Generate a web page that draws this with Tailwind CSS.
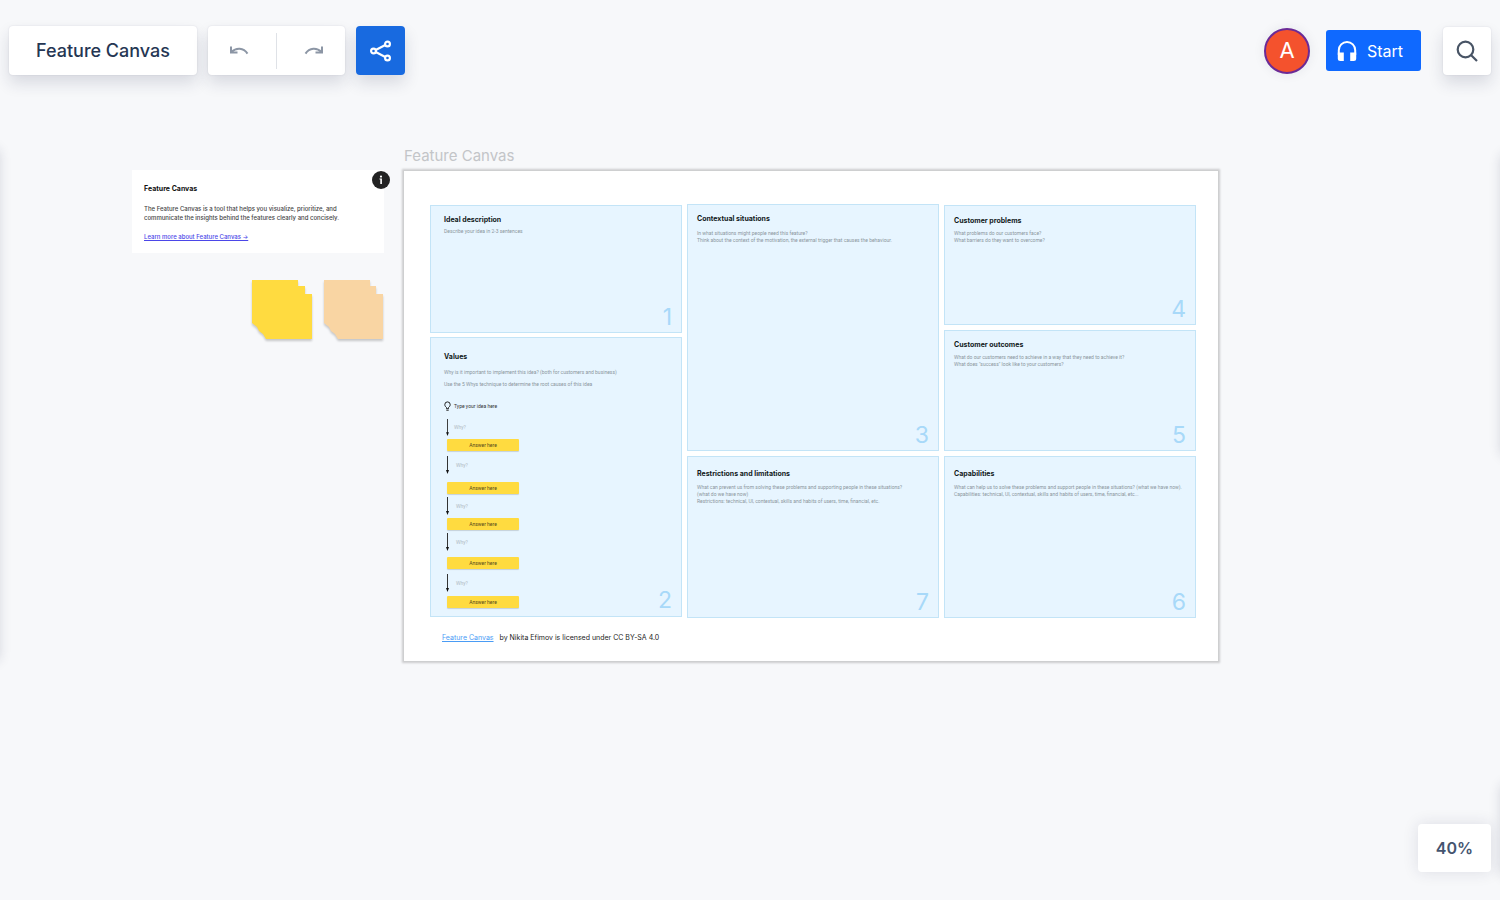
<!DOCTYPE html>
<html lang="en">
<head>
  <meta charset="UTF-8" />
  <meta name="viewport" content="width=device-width, initial-scale=1.0" />
  <title>Feature Canvas</title>
  <script src="https://cdn.jsdelivr.net/npm/@tailwindcss/browser@4"></script>
</head>
<body class="relative min-h-screen overflow-hidden bg-[#f7f8fa] font-['Inter',sans-serif] antialiased">

  <!-- Toolbar -->
  <header class="relative z-10 flex items-center justify-between px-[9px] pt-[26px]">
    <div class="flex items-center gap-[11px]">
      <button class="h-[49px] rounded bg-white px-[27px] text-lg font-medium text-[#253653] shadow-[0_8px_16px_rgba(30,35,70,0.14),0_0_2px_rgba(30,35,70,0.12)]">Feature Canvas</button>
      <div class="flex h-[49px] items-center rounded bg-white shadow-[0_8px_16px_rgba(30,35,70,0.14),0_0_2px_rgba(30,35,70,0.12)]">
        <button aria-label="Undo" class="flex h-full w-[68px] items-center justify-center pr-1.5">
          <svg class="h-3 w-5" viewBox="0 0 20 12" fill="none" stroke="#8c96a5" stroke-width="2"><path d="M2 1.500v6h6.500" /><path d="M2.500 7C7 2.300 14.500 2.300 18.500 8.600" /></svg>
        </button>
        <span class="h-9 w-px bg-[#dfe2e7]"></span>
        <button aria-label="Redo" class="flex h-full w-[68px] items-center justify-center pl-1.5">
          <svg class="h-3 w-5" viewBox="0 0 20 12" fill="none" stroke="#8c96a5" stroke-width="2"><path d="M18 1.500v6h-6.500" /><path d="M17.500 7C13 2.300 5.500 2.300 1.500 8.600" /></svg>
        </button>
      </div>
      <button aria-label="Share" class="flex size-[49px] items-center justify-center rounded bg-[#186ae0] shadow-[0_8px_16px_rgba(30,35,70,0.14)]">
        <svg class="size-6" viewBox="0 0 24 24" fill="none" stroke="#fff" stroke-width="2.200"><circle cx="4.500" cy="12" r="2.400" /><circle cx="18.500" cy="5" r="2.400" /><circle cx="18.500" cy="19" r="2.400" /><path d="M6.700 10.900 16.300 6.100M6.700 13.100l9.600 4.800" /></svg>
      </button>
    </div>
    <div class="flex items-center">
      <button aria-label="Account" class="size-[46px] rounded-full border-2 border-[#6b2a96] bg-[#f4522d] text-[22px] text-white shadow-[0_0_12px_rgba(30,35,70,0.08)]">A</button>
      <button class="ml-4 flex h-[41px] w-[95px] items-center gap-2.5 rounded-[3px] bg-[#0f69ff] pl-[11px] text-base text-white">
        <svg class="size-5" viewBox="0 0 20 20"><path d="M1.800 14V9.200a8.200 8.200 0 0 1 16.400 0V14" fill="none" stroke="#fff" stroke-width="2" /><path d="M.8 11.500h6V20H3.300A2.500 2.500 0 0 1 .8 17.500zM13.200 11.500h6v6a2.500 2.500 0 0 1-2.500 2.500h-3.500z" fill="#fff" /></svg>
        Start
      </button>
      <button aria-label="Search" class="ml-[22px] flex size-[48px] items-center justify-center rounded bg-white shadow-[0_8px_16px_rgba(30,35,70,0.14),0_0_2px_rgba(30,35,70,0.12)]">
        <svg class="size-6" viewBox="0 0 24 24" fill="none" stroke="#485465" stroke-width="2.200"><circle cx="10.500" cy="10.500" r="7.800" /><path d="m16 16 6 6" /></svg>
      </button>
    </div>
  </header>

  <!-- Canvas objects -->
  <main>
    <section class="absolute left-[132px] top-[170px] w-[252px] bg-white px-3 pb-3 pt-3.5 text-[6px] leading-[9px] font-medium text-[#444]">
      <h2 class="text-[7px] leading-[10px] font-bold text-[#111]">Feature Canvas</h2>
      <p class="mt-2.5 whitespace-nowrap">The Feature Canvas is a tool that helps you visualize, prioritize, and<br />communicate the insights behind the features clearly and concisely.</p>
      <a href="#" class="mt-2.5 block text-[#4b46e8] underline">Learn more about Feature Canvas →</a>
    </section>
    <button aria-label="Info" class="absolute left-[372px] top-[171px] size-[18px] rounded-full bg-[#222]">
      <svg viewBox="0 0 18 18" fill="#fff"><circle cx="9" cy="5.600" r="1.100" /><path d="M7.500 7.600h2.400v5.400H8.300V8.600h-.8z" /></svg>
    </button>

    <svg class="absolute left-[251px] top-[279px] h-[62px] w-[62px] drop-shadow-[0_2px_1px_rgba(0,0,0,0.2)]" viewBox="0 0 62 62" fill="#ffdb40"><path d="M1 1h46v6h7v8h7v45H15l-3-5-4-3-2-4-5-4z" /></svg>
    <svg class="absolute left-[323px] top-[279px] h-[62px] w-[62px] drop-shadow-[0_2px_1px_rgba(0,0,0,0.2)]" viewBox="0 0 62 62" fill="#f9d5a3"><path d="M1 1h46v6h6v8h7v45H15l-3-5-4-3-2-4-5-4z" /></svg>

    <h1 class="absolute left-[404px] top-[146px] text-[15px] leading-5 text-[#c3c5c8]">Feature Canvas</h1>

    <section class="absolute left-[404px] top-[171px] w-[814px] bg-white pt-[33px] pr-[22px] pb-[18px] pl-[26px] shadow-[0_0_2px_2px_rgba(0,0,0,0.18)]">
      <div class="grid grid-cols-3 gap-[5px] font-['Roboto',sans-serif] text-[5px] leading-[7px] whitespace-nowrap text-[#8b959d]">

        <div class="flex flex-col gap-1 pt-px">
          <article class="flex h-[128px] flex-col border border-[#c3e4f7] bg-[#e7f5ff] px-[13px] pt-[9px]">
            <h2 class="font-['Inter',sans-serif] text-[7px] leading-[10px] font-bold text-[#111820]">Ideal description</h2>
            <p class="mt-[3px]">Describe your idea in 2-3 sentences</p>
            <span class="mt-auto -mr-1 mb-[5px] self-end font-['Inter',sans-serif] text-[23px] leading-5 text-[#a8d9f9]">1</span>
          </article>
          <article class="flex h-[280px] flex-col border border-[#c3e4f7] bg-[#e7f5ff] px-[13px] pt-[14px]">
            <h2 class="font-['Inter',sans-serif] text-[7px] leading-[10px] font-bold text-[#111820]">Values</h2>
            <p class="mt-[7px]">Why is it important to implement this idea? (both for customers and business)</p>
            <p class="mt-[5px]">Use the 5 Whys technique to determine the root causes of this idea</p>
            <div class="mt-[13px] flex h-[10px] items-center gap-[3px] text-[#333]">
              <svg class="h-[10px] w-[7px]" viewBox="0 0 7 10" fill="none" stroke="#222"><path d="M2.500 6.500C1.500 5.800.8 4.800.8 3.600a2.700 2.700 0 0 1 5.400 0c0 1.200-.7 2.200-1.700 2.900v1.200h-2zM2.300 9.200h2.400" /></svg>
              Type your idea here
            </div>
            <div class="mt-2 ml-px flex items-center gap-1 text-[#b0bac2]">
              <svg class="h-[17px] w-[5px]" viewBox="0 0 5 18"><path d="M2.500 0v15" stroke="#333" /><path d="M1 14h3l-1.500 4z" fill="#111" /></svg>Why?
            </div>
            <div class="mt-[3px] ml-[3px] h-3 w-[72px] rounded-[1px] bg-[#ffdb40] text-center leading-3 text-[#54481a] shadow-[0_1px_1px_rgba(0,0,0,0.15)]">Answer here</div>
            <div class="mt-[5px] ml-px flex items-center gap-1.5 text-[#b0bac2]">
              <svg class="h-[18px] w-[5px]" viewBox="0 0 5 18"><path d="M2.500 0v15" stroke="#333" /><path d="M1 14h3l-1.500 4z" fill="#111" /></svg>Why?
            </div>
            <div class="mt-2 ml-[3px] h-3 w-[72px] rounded-[1px] bg-[#ffdb40] text-center leading-3 text-[#54481a] shadow-[0_1px_1px_rgba(0,0,0,0.15)]">Answer here</div>
            <div class="mt-[3px] ml-px flex items-center gap-1.5 text-[#b0bac2]">
              <svg class="h-[18px] w-[5px]" viewBox="0 0 5 18"><path d="M2.500 0v15" stroke="#333" /><path d="M1 14h3l-1.500 4z" fill="#111" /></svg>Why?
            </div>
            <div class="mt-[3px] ml-[3px] h-3 w-[72px] rounded-[1px] bg-[#ffdb40] text-center leading-3 text-[#54481a] shadow-[0_1px_1px_rgba(0,0,0,0.15)]">Answer here</div>
            <div class="mt-[3px] ml-px flex items-center gap-1.5 text-[#b0bac2]">
              <svg class="h-[18px] w-[5px]" viewBox="0 0 5 18"><path d="M2.500 0v15" stroke="#333" /><path d="M1 14h3l-1.500 4z" fill="#111" /></svg>Why?
            </div>
            <div class="mt-[6px] ml-[3px] h-3 w-[72px] rounded-[1px] bg-[#ffdb40] text-center leading-3 text-[#54481a] shadow-[0_1px_1px_rgba(0,0,0,0.15)]">Answer here</div>
            <div class="mt-[5px] ml-px flex items-center gap-1.5 text-[#b0bac2]">
              <svg class="h-[18px] w-[5px]" viewBox="0 0 5 18"><path d="M2.500 0v15" stroke="#333" /><path d="M1 14h3l-1.500 4z" fill="#111" /></svg>Why?
            </div>
            <div class="mt-1 flex items-start justify-between">
              <div class="ml-[3px] h-3 w-[72px] rounded-[1px] bg-[#ffdb40] text-center leading-3 text-[#54481a] shadow-[0_1px_1px_rgba(0,0,0,0.15)]">Answer here</div>
              <span class="-mt-1.5 -mr-1 font-['Inter',sans-serif] text-[23px] leading-5 text-[#a8d9f9]">2</span>
            </div>
          </article>
        </div>

        <div class="flex flex-col gap-[5px]">
          <article class="flex h-[247px] flex-col border border-[#c3e4f7] bg-[#e7f5ff] px-[9px] pt-[9px]">
            <h2 class="font-['Inter',sans-serif] text-[7px] leading-[10px] font-bold text-[#111820]">Contextual situations</h2>
            <p class="mt-1.5">In what situations might people need this feature?<br />Think about the context of the motivation, the external trigger that causes the behaviour.</p>
            <span class="mt-auto mb-[5px] self-end font-['Inter',sans-serif] text-[23px] leading-5 text-[#a8d9f9]">3</span>
          </article>
          <article class="flex h-[162px] flex-col border border-[#c3e4f7] bg-[#e7f5ff] px-[9px] pt-3">
            <h2 class="font-['Inter',sans-serif] text-[7px] leading-[10px] font-bold text-[#111820]">Restrictions and limitations</h2>
            <p class="mt-[5px]">What can prevent us from solving these problems and supporting people in these situations?<br />(what do we have now)<br />Restrictions: technical, UI, contextual, skills and habits of users, time, financial, etc.</p>
            <span class="mt-auto mb-[5px] self-end font-['Inter',sans-serif] text-[23px] leading-5 text-[#a8d9f9]">7</span>
          </article>
        </div>

        <div class="flex flex-col gap-[5px] pt-px">
          <article class="flex h-[120px] flex-col border border-[#c3e4f7] bg-[#e7f5ff] px-[9px] pt-[10px]">
            <h2 class="font-['Inter',sans-serif] text-[7px] leading-[10px] font-bold text-[#111820]">Customer problems</h2>
            <p class="mt-1">What problems do our customers face?<br />What barriers do they want to overcome?</p>
            <span class="mt-auto mb-[5px] self-end font-['Inter',sans-serif] text-[23px] leading-5 text-[#a8d9f9]">4</span>
          </article>
          <article class="flex h-[121px] flex-col border border-[#c3e4f7] bg-[#e7f5ff] px-[9px] pt-[9px]">
            <h2 class="font-['Inter',sans-serif] text-[7px] leading-[10px] font-bold text-[#111820]">Customer outcomes</h2>
            <p class="mt-1">What do our customers need to achieve in a way that they need to achieve it?<br />What does "success" look like to your customers?</p>
            <span class="mt-auto mb-[5px] self-end font-['Inter',sans-serif] text-[23px] leading-5 text-[#a8d9f9]">5</span>
          </article>
          <article class="flex h-[162px] flex-col border border-[#c3e4f7] bg-[#e7f5ff] px-[9px] pt-3">
            <h2 class="font-['Inter',sans-serif] text-[7px] leading-[10px] font-bold text-[#111820]">Capabilities</h2>
            <p class="mt-[5px]">What can help us to solve these problems and support people in these situations? (what we have now).<br />Capabilities: technical, UI, contextual, skills and habits of users, time, financial, etc...</p>
            <span class="mt-auto mb-[5px] self-end font-['Inter',sans-serif] text-[23px] leading-5 text-[#a8d9f9]">6</span>
          </article>
        </div>
      </div>

      <p class="mt-[15px] ml-3 flex gap-1.5 text-[7px] leading-[10px] text-[#222]">
        <a href="#" class="text-[#4a9cf5] underline">Feature Canvas </a>
        by Nikita Efimov is licensed under CC BY-SA 4.0
      </p>
    </section>
  </main>

  <!-- Collapsed side panels, only their shadows reach the page -->
  <div class="absolute -left-[60px] top-[150px] h-[510px] w-[58px] shadow-[0_0_12px_rgba(30,35,70,0.2)]"></div>
  <div class="absolute -right-[60px] top-[155px] h-[300px] w-[58px] shadow-[0_0_12px_rgba(30,35,70,0.2)]"></div>
  <div class="absolute -right-[60px] top-[785px] h-[90px] w-[58px] shadow-[0_0_12px_rgba(30,35,70,0.2)]"></div>

  <button class="absolute right-[9px] bottom-[28px] h-[48px] w-[73px] rounded bg-white text-base font-semibold text-[#44546f] shadow-[0_0_16px_rgba(30,35,70,0.12)]">40%</button>
</body>
</html>
